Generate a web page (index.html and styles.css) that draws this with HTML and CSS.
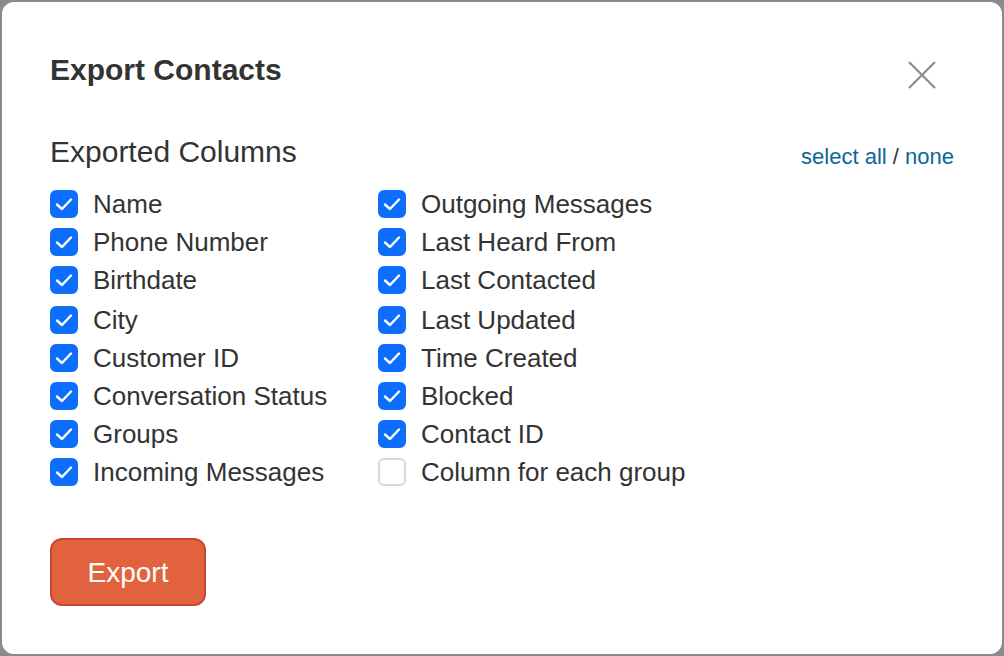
FILE: index.html
```html
<!DOCTYPE html>
<html>
<head>
<meta charset="utf-8">
<link rel="stylesheet" href="styles.css">
</head>
<body>
<div class="modal">
  <div class="header">
    <h1 class="title">Export Contacts</h1>
    <button class="close" aria-label="Close">
      <svg width="28" height="28" viewBox="0 0 28 28"><path d="M1 1 L27 27 M27 1 L1 27" stroke="#8c8c8c" stroke-width="2.2" fill="none"/></svg>
    </button>
  </div>
  <div class="section-head">
    <h2 class="subtitle">Exported Columns</h2>
    <div class="select"><a class="link">select all</a> / <a class="link">none</a></div>
  </div>
  <div class="grid">
    <div class="col">
      <label class="row"><span class="cb on"></span>Name</label>
      <label class="row"><span class="cb on"></span>Phone Number</label>
      <label class="row"><span class="cb on"></span>Birthdate</label>
      <label class="row tall"><span class="cb on"></span>City</label>
      <label class="row"><span class="cb on"></span>Customer ID</label>
      <label class="row"><span class="cb on"></span>Conversation Status</label>
      <label class="row"><span class="cb on"></span>Groups</label>
      <label class="row"><span class="cb on"></span>Incoming Messages</label>
    </div>
    <div class="col">
      <label class="row"><span class="cb on"></span>Outgoing Messages</label>
      <label class="row"><span class="cb on"></span>Last Heard From</label>
      <label class="row"><span class="cb on"></span>Last Contacted</label>
      <label class="row tall"><span class="cb on"></span>Last Updated</label>
      <label class="row"><span class="cb on"></span>Time Created</label>
      <label class="row"><span class="cb on"></span>Blocked</label>
      <label class="row"><span class="cb on"></span>Contact ID</label>
      <label class="row"><span class="cb"></span>Column for each group</label>
    </div>
  </div>
  <button class="export">Export</button>
</div>
</body>
</html>
```
FILE: styles.css
```css
html, body {
  margin: 0;
  padding: 0;
  height: 100%;
}
body {
  background: #8a8b8c;
  font-family: "Liberation Sans", Arial, sans-serif;
  color: #333;
}
.modal {
  box-sizing: border-box;
  margin: 2px;
  height: 652px;
  background: #fff;
  border-radius: 12px;
  padding: 48px 48px 0 48px;
}
.header {
  display: flex;
  justify-content: space-between;
  align-items: flex-start;
}
.title {
  margin: 0;
  font-size: 30px;
  font-weight: bold;
  line-height: 40px;
}
.close {
  border: 0;
  background: none;
  padding: 0;
  margin: 11px 18px 0 0;
  width: 28px;
  height: 28px;
  cursor: pointer;
}
.close svg { display: block; }
.section-head {
  display: flex;
  justify-content: space-between;
  align-items: flex-end;
  margin-top: 42px;
}
.subtitle {
  margin: 0;
  font-size: 30px;
  font-weight: normal;
  line-height: 40px;
}
.select {
  font-size: 22px;
  line-height: 24px;
  margin-bottom: 3px;
}
.link {
  color: #0a6896;
  text-decoration: none;
  cursor: pointer;
}
.grid {
  display: flex;
  margin-top: 13px;
}
.col {
  display: flex;
  flex-direction: column;
}
.col:first-child { width: 328px; }
.row {
  display: flex;
  align-items: center;
  height: 38px;
  font-size: 26px;
  gap: 15px;
}
.row.tall { height: 40px; padding-top: 2px; box-sizing: border-box; }
.cb {
  box-sizing: border-box;
  width: 28px;
  height: 28px;
  border-radius: 6px;
  border: 2px solid #d8d8d8;
  background: #fff;
  flex: none;
}
.cb.on {
  border-color: #0d6efd;
  background: #0d6efd url("data:image/svg+xml,%3Csvg xmlns='http://www.w3.org/2000/svg' viewBox='0 0 24 24'%3E%3Cpath d='M5 12.5 L10 17 L19 7.5' fill='none' stroke='%23fff' stroke-width='2.4' stroke-linecap='round' stroke-linejoin='round'/%3E%3C/svg%3E") center/24px 24px no-repeat;
}
.export {
  margin-top: 47px;
  width: 156px;
  height: 68px;
  background: #e2613f;
  border: 2px solid #c9482a;
  border-radius: 12px;
  color: #fff;
  font-family: "Liberation Sans", Arial, sans-serif;
  font-size: 28px;
  padding-top: 2px;
  cursor: pointer;
}
```
